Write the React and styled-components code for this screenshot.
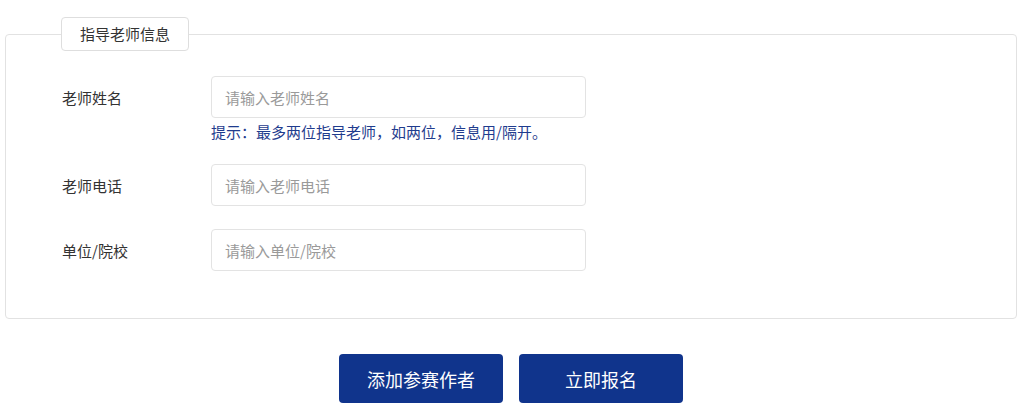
import styled, { createGlobalStyle } from 'styled-components';

const GlobalStyle = createGlobalStyle`
    html, body {
        margin: 0;
        padding: 0;
        background: #ffffff;
    }
    body {
        font-family: "Noto Sans CJK SC", "Noto Sans", sans-serif;
        color: #333333;
    }
`

const Page = styled.div`
    width: 1024px;
    box-sizing: border-box;
    padding: 17px 7px 0 5px;
`
const Fieldset = styled.fieldset`
    margin: 0;
    padding: 0 0 47px 56px;
    border: 1px solid #e2e2e2;
    border-radius: 4px;
    min-width: 0;
`
const Legend = styled.legend`
    margin-left: -1px;
    box-sizing: border-box;
    height: 34px;
    padding: 0 18px;
    border: 1px solid #dedede;
    border-radius: 4px;
    background: #fff;
    font-size: 15px;
    line-height: 32px;
    color: #333;
`
const Rows = styled.div`
    display: flex;
    flex-direction: column;
    gap: 23px;
    padding-top: 25px;
`
const Row = styled.div`
    display: grid;
    grid-template-columns: 149px 375px;
    align-items: center;
    row-gap: 4px;
`
const Label = styled.label`
    font-size: 15px;
    color: #333;
`
const Input = styled.input`
    box-sizing: border-box;
    width: 375px;
    height: 42px;
    padding: 0 13px;
    border: 1px solid #e3e3e3;
    border-radius: 4px;
    font-family: inherit;
    font-size: 15px;
    color: #333;
    outline: none;
    &::placeholder {
        color: #9a9a9a;
    }
`
const Hint = styled.div`
    grid-column: 2;
    font-size: 15px;
    line-height: 19px;
    color: #1f3c8e;
    white-space: nowrap;
`
const Actions = styled.div`
    display: flex;
    justify-content: center;
    gap: 16px;
    padding-top: 35px;
`
const Button = styled.button`
    width: 164px;
    height: 49px;
    border: none;
    border-radius: 4px;
    background: #10348c;
    color: #fff;
    font-family: inherit;
    font-size: 18px;
    cursor: pointer;
`

const fields = [
    { label: '老师姓名', placeholder: '请输入老师姓名', hint: '提示：最多两位指导老师，如两位，信息用/隔开。' },
    { label: '老师电话', placeholder: '请输入老师电话' },
    { label: '单位/院校', placeholder: '请输入单位/院校' },
];

export default function App() {
    return (
        <>
            <GlobalStyle />
            <Page>
                <Fieldset>
                    <Legend>指导老师信息</Legend>
                    <Rows>
                        {fields.map((f) => (
                            <Row key={f.label}>
                                <Label>{f.label}</Label>
                                <Input placeholder={f.placeholder} />
                                {f.hint && <Hint>{f.hint}</Hint>}
                            </Row>
                        ))}
                    </Rows>
                </Fieldset>
                <Actions>
                    <Button>添加参赛作者</Button>
                    <Button>立即报名</Button>
                </Actions>
            </Page>
        </>
    )
}
